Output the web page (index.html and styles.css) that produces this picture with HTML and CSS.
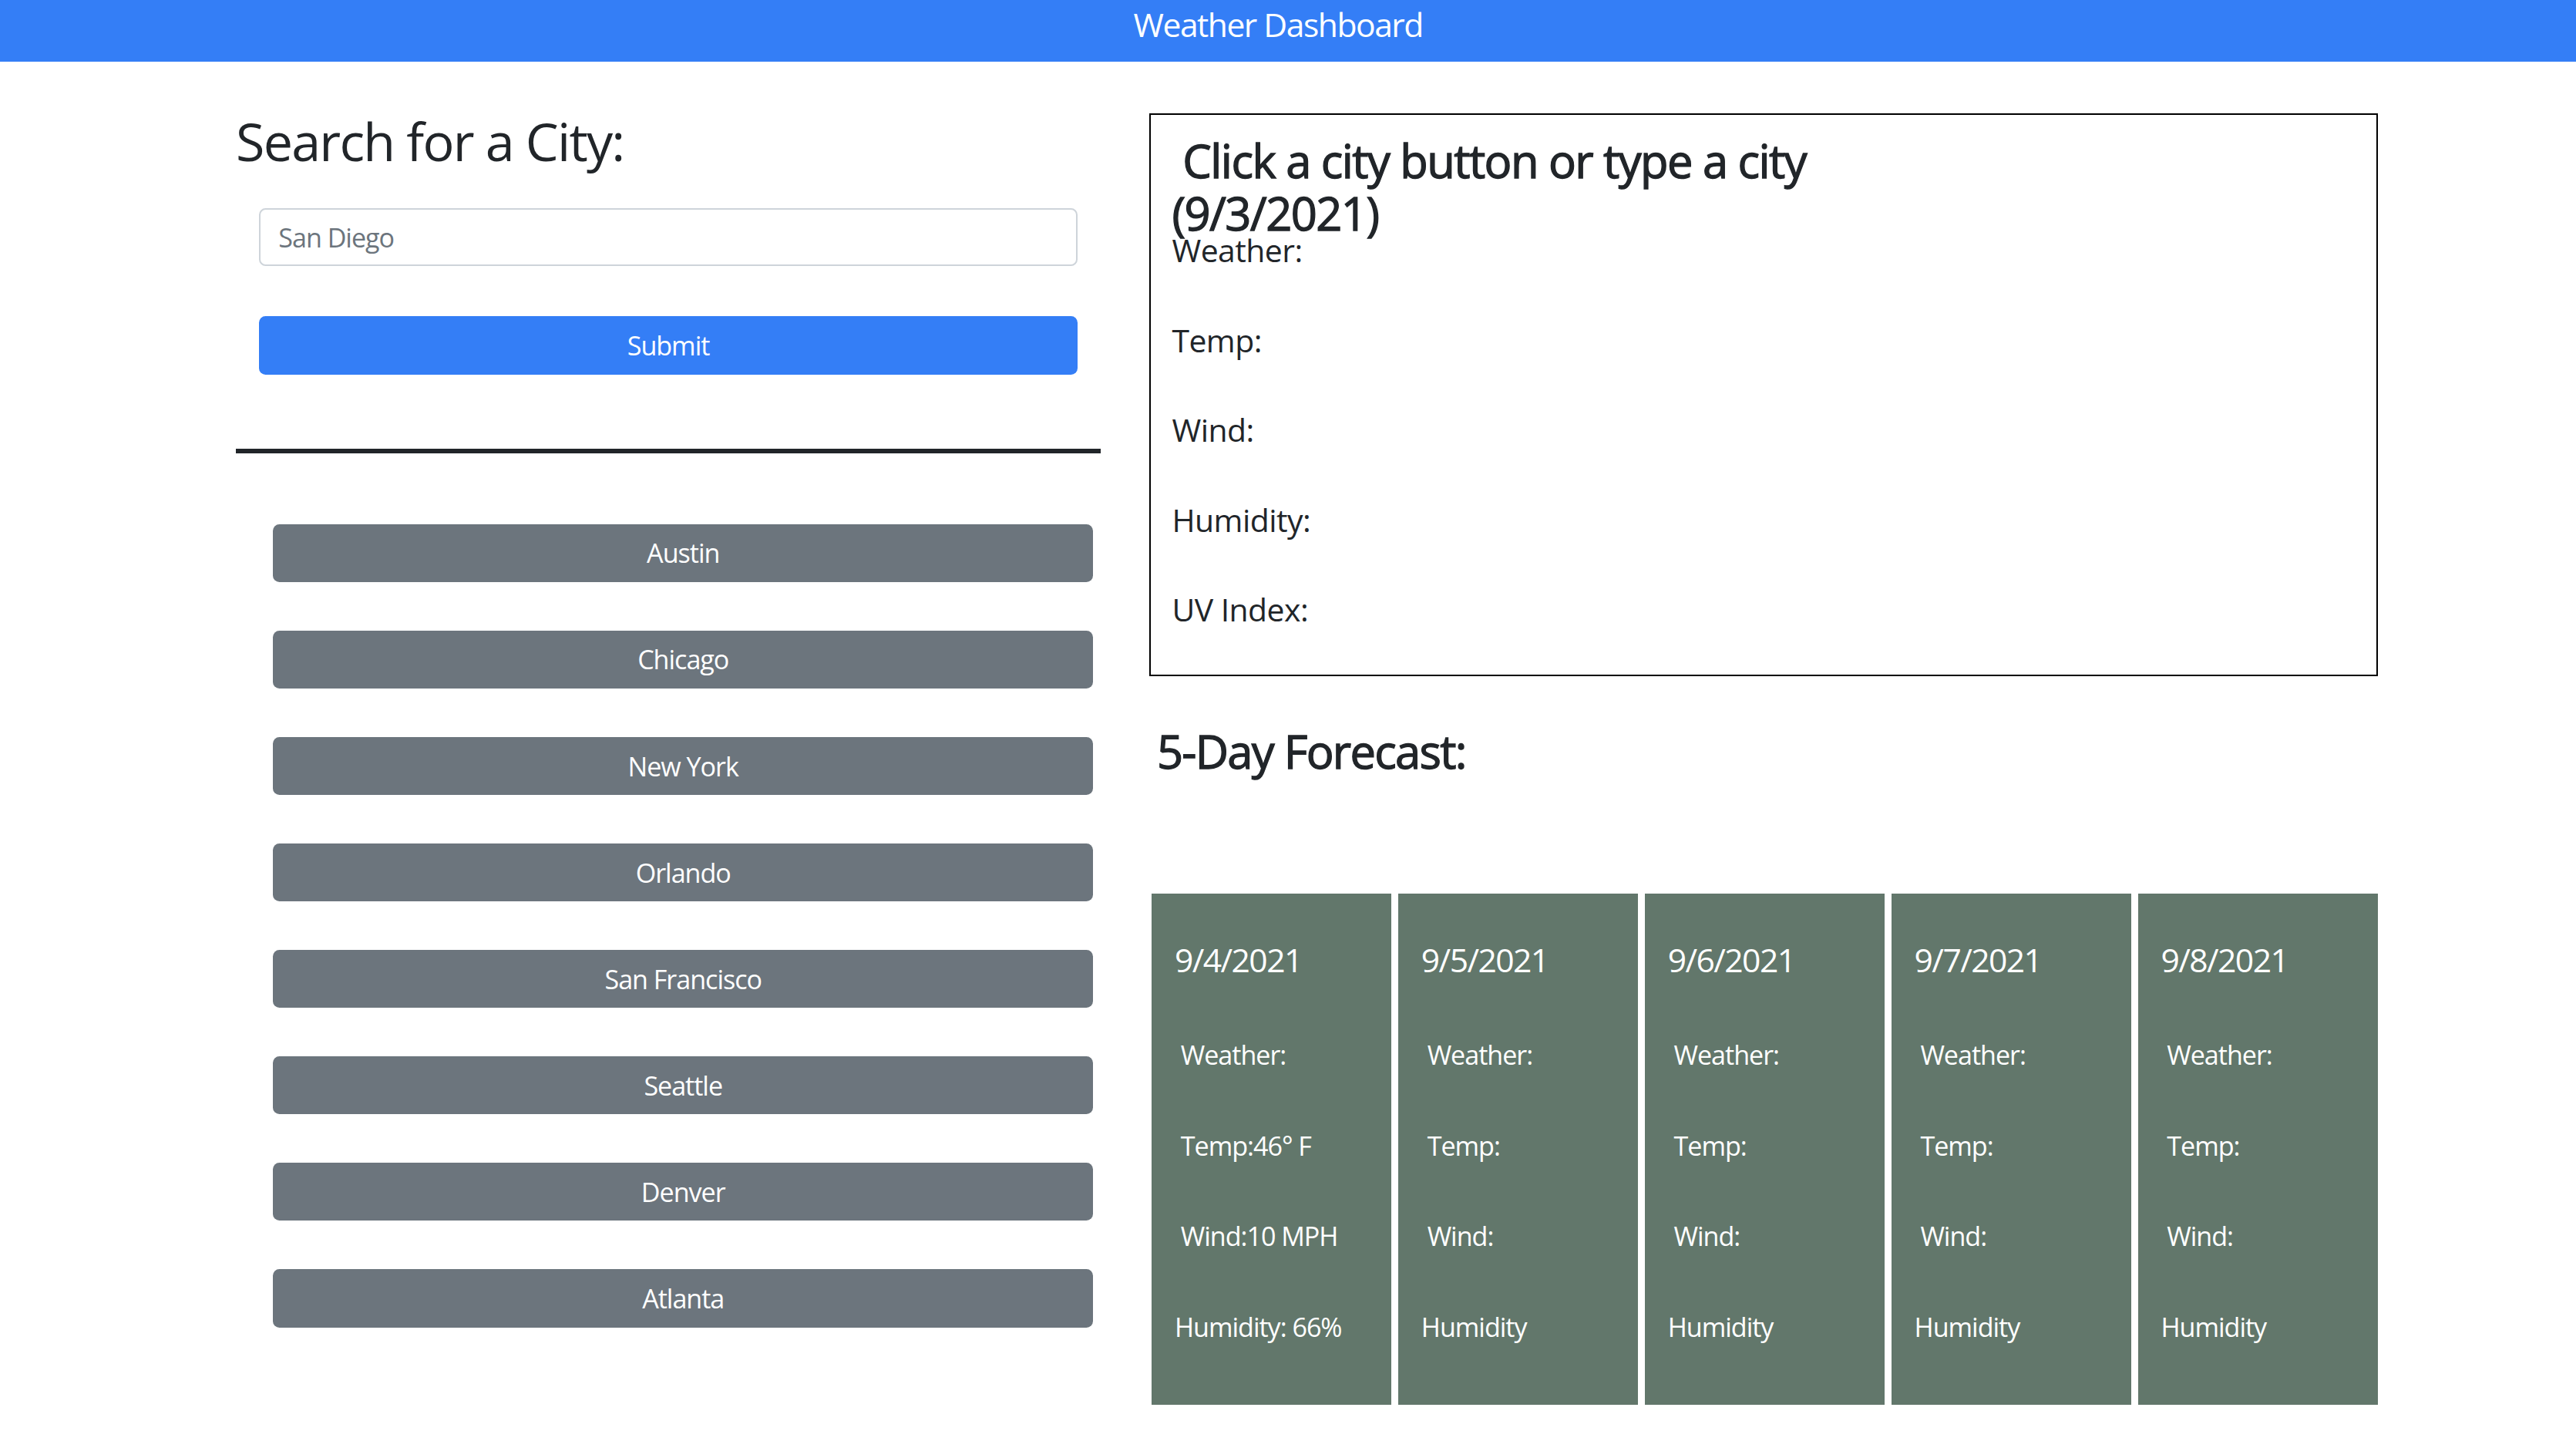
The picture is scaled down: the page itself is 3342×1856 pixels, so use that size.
FILE: index.html
```html
<!DOCTYPE html>
<html lang="en">
<head>
<meta charset="utf-8">
<title>Weather Dashboard</title>
<link rel="stylesheet" href="styles.css">
</head>
<body>
<header class="topbar">Weather Dashboard</header>
<main class="layout">
  <section class="sidebar">
    <h2 class="search-title">Search for a City:</h2>
    <form class="search-form">
      <input class="city-input" type="text" value="San Diego">
      <button class="submit-btn" type="button">Submit</button>
    </form>
    <hr class="divider">
    <div class="city-list">
      <button class="city-btn" type="button">Austin</button>
      <button class="city-btn" type="button">Chicago</button>
      <button class="city-btn" type="button">New York</button>
      <button class="city-btn" type="button">Orlando</button>
      <button class="city-btn" type="button">San Francisco</button>
      <button class="city-btn" type="button">Seattle</button>
      <button class="city-btn" type="button">Denver</button>
      <button class="city-btn" type="button">Atlanta</button>
    </div>
  </section>
  <section class="content">
    <div class="current">
      <h3 class="current-title">&nbsp;Click a city button or type a city<br>(9/3/2021)</h3>
      <p class="current-line">Weather:</p>
      <p class="current-line">Temp:</p>
      <p class="current-line">Wind:</p>
      <p class="current-line">Humidity:</p>
      <p class="current-line">UV Index:</p>
    </div>
    <h3 class="forecast-title">5-Day Forecast:</h3>
    <div class="forecast">
      <div class="day">
        <h5 class="day-date">9/4/2021</h5>
        <p class="day-line">&nbsp;Weather:</p>
        <p class="day-line">&nbsp;Temp:46° F</p>
        <p class="day-line">&nbsp;Wind:10 MPH</p>
        <p class="day-line">Humidity: 66%</p>
      </div>
      <div class="day">
        <h5 class="day-date">9/5/2021</h5>
        <p class="day-line">&nbsp;Weather:</p>
        <p class="day-line">&nbsp;Temp:</p>
        <p class="day-line">&nbsp;Wind:</p>
        <p class="day-line">Humidity</p>
      </div>
      <div class="day">
        <h5 class="day-date">9/6/2021</h5>
        <p class="day-line">&nbsp;Weather:</p>
        <p class="day-line">&nbsp;Temp:</p>
        <p class="day-line">&nbsp;Wind:</p>
        <p class="day-line">Humidity</p>
      </div>
      <div class="day">
        <h5 class="day-date">9/7/2021</h5>
        <p class="day-line">&nbsp;Weather:</p>
        <p class="day-line">&nbsp;Temp:</p>
        <p class="day-line">&nbsp;Wind:</p>
        <p class="day-line">Humidity</p>
      </div>
      <div class="day">
        <h5 class="day-date">9/8/2021</h5>
        <p class="day-line">&nbsp;Weather:</p>
        <p class="day-line">&nbsp;Temp:</p>
        <p class="day-line">&nbsp;Wind:</p>
        <p class="day-line">Humidity</p>
      </div>
    </div>
  </section>
</main>
</body>
</html>
```
FILE: styles.css
```css
html {
  zoom: 2.1314;
}

body {
  margin: 0;
  font-family: "Open Sans", "Liberation Sans", sans-serif;
  color: #212529;
  background: #ffffff;
  letter-spacing: -0.03em;
}

.topbar {
  height: 37.5px;
  box-sizing: border-box;
  padding-right: 12px;
  background: #347ef6;
  color: #ffffff;
  font-size: 20px;
  line-height: 30px;
  text-align: center;
  letter-spacing: -0.035em;
}

.layout {
  display: flex;
  align-items: flex-start;
  padding-left: 143.6px;
}

.sidebar {
  width: 526.4px;
  flex: none;
}

.search-title {
  margin: 29px 0 0;
  font-size: 32px;
  font-weight: 400;
  line-height: 1.2;
  letter-spacing: -0.026em;
}

.search-form {
  display: flex;
  flex-direction: column;
  gap: 30.5px;
  margin: 21.8px 14px 0 14px;
}

.city-input {
  height: 35.2px;
  box-sizing: border-box;
  padding: 0 11px;
  border: 1px solid #ced4da;
  border-radius: 4px;
  font-family: inherit;
  font-size: 16px;
  letter-spacing: -0.03em;
  color: #6c757d;
  background: #ffffff;
}

.submit-btn {
  height: 35.5px;
  border: none;
  border-radius: 4px;
  background: #347ef6;
  color: #ffffff;
  font-family: inherit;
  font-size: 16px;
  letter-spacing: -0.03em;
}

.divider {
  height: 2.8px;
  margin: 45px 0 0;
  border: none;
  background: #212529;
}

.city-list {
  display: flex;
  flex-direction: column;
  gap: 29.6px;
  margin: 43.3px 4.5px 0 22.5px;
}

.city-btn {
  height: 35.2px;
  border: none;
  border-radius: 4px;
  background: #6c757d;
  color: #ffffff;
  font-family: inherit;
  font-size: 16px;
  letter-spacing: -0.03em;
}

.content {
  width: 748px;
  margin-left: 29.4px;
  flex: none;
}

.current {
  margin-top: 31.3px;
  padding: 11.8px 13px 0;
  border: 1px solid #000000;
}

.current-title {
  margin: 0 0 -7.4px;
  font-size: 28px;
  font-weight: 400;
  line-height: 32px;
  letter-spacing: -0.026em;
  -webkit-text-stroke: 0.6px #212529;
}

.current-line {
  margin: 0 0 25.8px;
  font-size: 19.2px;
  line-height: 28.8px;
  letter-spacing: -0.013em;
}

.current-line:last-child {
  margin-bottom: 25.1px;
}

.forecast-title {
  margin: 28.9px 0 0 4.8px;
  font-size: 28px;
  font-weight: 400;
  line-height: 33.6px;
  letter-spacing: -0.029em;
  -webkit-text-stroke: 0.6px #212529;
}

.forecast {
  display: flex;
  gap: 4px;
  margin: 69.9px 0 0 1.6px;
}

.day {
  flex: 1;
  height: 311px;
  box-sizing: border-box;
  padding: 28px 14px 0;
  background: #62776b;
  color: #ffffff;
}

.day-date {
  margin: 0 0 34.2px;
  font-size: 20px;
  font-weight: 400;
  line-height: 24px;
  letter-spacing: -0.037em;
}

.day-line {
  margin: 0 0 31.3px;
  font-size: 16px;
  line-height: 24px;
}
```
